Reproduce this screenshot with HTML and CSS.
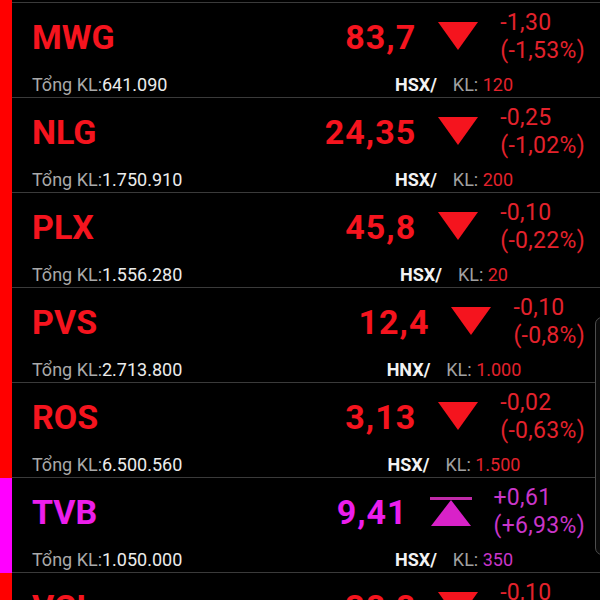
FILE: index.html
```html
<!DOCTYPE html>
<html lang="vi">
<head>
<meta charset="utf-8">
<title>Bảng giá</title>
<link rel="stylesheet" href="styles.css">
</head>
<body>
<div class="list">
  <div class="row stub down"><div class="bar"></div><div class="content"></div></div>

  <div class="row down">
    <div class="bar"></div>
    <div class="content">
      <div class="top">
        <div class="ticker">MWG</div>
        <div class="quote">
          <div class="price">83,7</div>
          <svg class="tri" width="40" height="28" viewBox="0 0 40 28"><polygon points="0,0 40,0 20,28"/></svg>
          <div class="chg"><div>-1,30</div><div>(-1,53%)</div></div>
        </div>
      </div>
      <div class="bottom">
        <div class="vol"><span class="lbl">Tổng KL:</span><span class="num">641.090</span></div>
        <div class="mkt"><span class="ex">HSX/</span><span class="kl">KL:</span> <span class="q">120</span></div>
      </div>
    </div>
  </div>

  <div class="row down">
    <div class="bar"></div>
    <div class="content">
      <div class="top">
        <div class="ticker">NLG</div>
        <div class="quote">
          <div class="price">24,35</div>
          <svg class="tri" width="40" height="28" viewBox="0 0 40 28"><polygon points="0,0 40,0 20,28"/></svg>
          <div class="chg"><div>-0,25</div><div>(-1,02%)</div></div>
        </div>
      </div>
      <div class="bottom">
        <div class="vol"><span class="lbl">Tổng KL:</span><span class="num">1.750.910</span></div>
        <div class="mkt"><span class="ex">HSX/</span><span class="kl">KL:</span> <span class="q">200</span></div>
      </div>
    </div>
  </div>

  <div class="row down">
    <div class="bar"></div>
    <div class="content">
      <div class="top">
        <div class="ticker">PLX</div>
        <div class="quote">
          <div class="price">45,8</div>
          <svg class="tri" width="40" height="28" viewBox="0 0 40 28"><polygon points="0,0 40,0 20,28"/></svg>
          <div class="chg"><div>-0,10</div><div>(-0,22%)</div></div>
        </div>
      </div>
      <div class="bottom">
        <div class="vol"><span class="lbl">Tổng KL:</span><span class="num">1.556.280</span></div>
        <div class="mkt"><span class="ex">HSX/</span><span class="kl">KL:</span> <span class="q">20</span></div>
      </div>
    </div>
  </div>

  <div class="row down">
    <div class="bar"></div>
    <div class="content">
      <div class="top">
        <div class="ticker">PVS</div>
        <div class="quote">
          <div class="price">12,4</div>
          <svg class="tri" width="40" height="28" viewBox="0 0 40 28"><polygon points="0,0 40,0 20,28"/></svg>
          <div class="chg"><div>-0,10</div><div>(-0,8%)</div></div>
        </div>
      </div>
      <div class="bottom">
        <div class="vol"><span class="lbl">Tổng KL:</span><span class="num">2.713.800</span></div>
        <div class="mkt"><span class="ex">HNX/</span><span class="kl">KL:</span> <span class="q">1.000</span></div>
      </div>
    </div>
  </div>

  <div class="row down">
    <div class="bar"></div>
    <div class="content">
      <div class="top">
        <div class="ticker">ROS</div>
        <div class="quote">
          <div class="price">3,13</div>
          <svg class="tri" width="40" height="28" viewBox="0 0 40 28"><polygon points="0,0 40,0 20,28"/></svg>
          <div class="chg"><div>-0,02</div><div>(-0,63%)</div></div>
        </div>
      </div>
      <div class="bottom">
        <div class="vol"><span class="lbl">Tổng KL:</span><span class="num">6.500.560</span></div>
        <div class="mkt"><span class="ex">HSX/</span><span class="kl">KL:</span> <span class="q">1.500</span></div>
      </div>
    </div>
  </div>

  <div class="row ceil">
    <div class="bar"></div>
    <div class="content">
      <div class="top">
        <div class="ticker">TVB</div>
        <div class="quote">
          <div class="price">9,41</div>
          <svg class="tri" width="42" height="29" viewBox="0 0 42 29"><rect x="0" y="0" width="42" height="3" class="cap"/><polygon points="21,3 41,29 1,29"/></svg>
          <div class="chg"><div>+0,61</div><div>(+6,93%)</div></div>
        </div>
      </div>
      <div class="bottom">
        <div class="vol"><span class="lbl">Tổng KL:</span><span class="num">1.050.000</span></div>
        <div class="mkt"><span class="ex">HSX/</span><span class="kl">KL:</span> <span class="q">350</span></div>
      </div>
    </div>
  </div>

  <div class="row down">
    <div class="bar"></div>
    <div class="content">
      <div class="top">
        <div class="ticker">VCI</div>
        <div class="quote">
          <div class="price">38,8</div>
          <svg class="tri" width="40" height="28" viewBox="0 0 40 28"><polygon points="0,0 40,0 20,28"/></svg>
          <div class="chg"><div>-0,10</div><div>(-0,26%)</div></div>
        </div>
      </div>
      <div class="bottom">
        <div class="vol"><span class="lbl">Tổng KL:</span><span class="num">980.120</span></div>
        <div class="mkt"><span class="ex">HSX/</span><span class="kl">KL:</span> <span class="q">100</span></div>
      </div>
    </div>
  </div>
</div>
<div class="scrollbar"></div>
</body>
</html>
```

FILE: styles.css
```css
html, body {
  margin: 0;
  padding: 0;
  background: #000;
  height: 600px;
  overflow: hidden;
}
body {
  position: relative;
  font-family: Roboto, "Liberation Sans", sans-serif;
  color: #e8e8e8;
}
.list {
  display: flex;
  flex-direction: column;
}
.row {
  display: flex;
}
.row .bar {
  width: 12px;
  flex: 0 0 12px;
}
.row.down .bar { background: #ff0000; }
.row.ceil .bar { background: #ff00ff; }
.content {
  flex: 1;
  border-bottom: 1px solid #3a3a3a;
  padding-left: 20px;
}
.row.stub .content { height: 2px; }

.top {
  display: flex;
  align-items: flex-start;
  height: 70px;
}
.ticker {
  margin-top: 14px;
  font-size: 34px;
  line-height: 40px;
  font-weight: 700;
}
.quote {
  margin-left: auto;
  display: flex;
  align-items: flex-start;
  padding-right: 15px;
}
.price {
  margin-top: 14px;
  font-size: 34px;
  line-height: 40px;
  font-weight: 700;
  letter-spacing: 1px;
}
.tri {
  display: block;
  margin-top: 19px;
  margin-left: 22px;
}
.chg {
  margin-top: 6px;
  margin-left: 22px;
  font-size: 23px;
  line-height: 28px;
  letter-spacing: 0.3px;
}

.bottom {
  display: grid;
  grid-template-columns: 276px 1fr;
  height: 24px;
  font-size: 18px;
  line-height: 24px;
}
.lbl { color: #a9a9a9; }
.num { color: #ececec; }
.mkt { text-align: center; }
.ex {
  font-weight: 700;
  color: #f2f2f2;
  margin-right: 16px;
}
.kl { color: #a0a0a0; }

.down .ticker, .down .price { color: #f5141e; }
.down .tri polygon { fill: #f5141e; }
.down .chg, .down .q { color: #e3222c; }

.ceil .ticker, .ceil .price { color: #ec1eec; }
.ceil .tri polygon { fill: #d822c8; }
.ceil .tri .cap { fill: #c02aa8; }
.ceil .chg, .ceil .q { color: #c936c9; }

.scrollbar {
  position: absolute;
  left: 595px;
  top: 317px;
  width: 14px;
  height: 236px;
  border: 1.5px solid #4e4e4e;
  border-radius: 7px;
  background: #0b0b0b;
}
```
